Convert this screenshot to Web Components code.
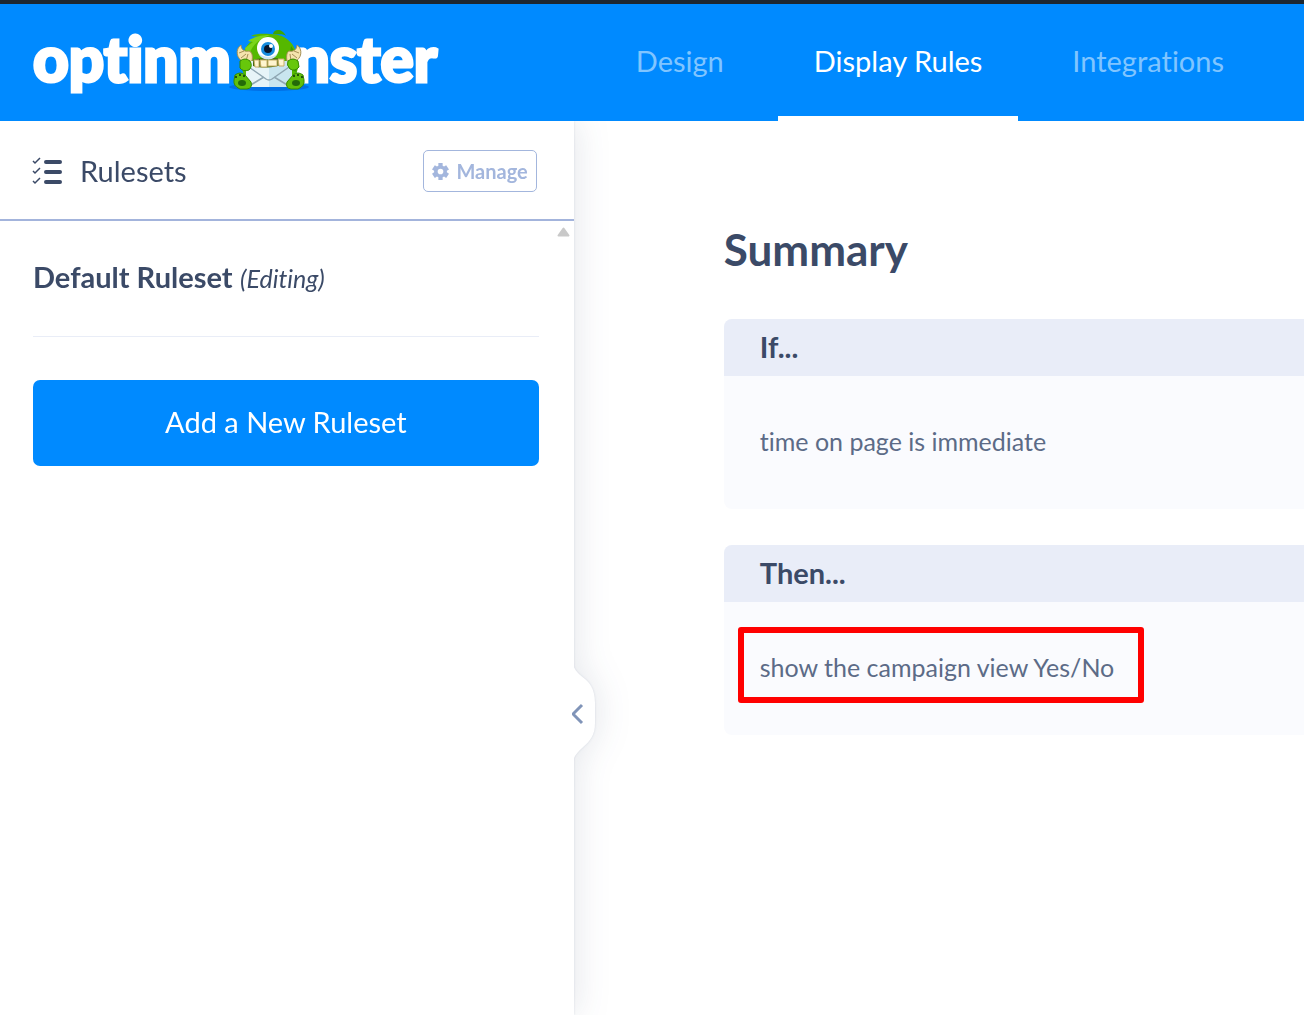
<!DOCTYPE html>
<html lang="en">
<head>
    <meta charset="UTF-8">
    <meta name="viewport" content="width=device-width, initial-scale=1.0">
    <title>OptinMonster - Display Rules</title>
    <style>
        body {
            margin: 0;
            background: #ffffff;
            color: #3b4a67;
            font-family: Lato, "Liberation Sans", sans-serif;
            font-size: 29px;
            font-variant-ligatures: none;
            overflow-x: hidden;
        }
    </style>
</head>
<body>
    <rules-app></rules-app>

    <script>
        class MonsterLogo extends HTMLElement {
            constructor() {
                super();
                this.attachShadow({ mode: 'open' });
                this.shadowRoot.innerHTML = `
                    <style>
                        :host { display: block; }
                        a {
                            display: flex;
                            align-items: flex-end;
                            color: #ffffff;
                            font-size: 62px;
                            font-weight: 900;
                            line-height: 76px;
                            text-decoration: none;
                            -webkit-text-stroke: 3px #ffffff;
                        }
                        svg {
                            flex: none;
                            width: 84px;
                            height: 72px;
                            margin: 0 -16px 0 -4px;
                            position: relative;
                        }
                    </style>
                    <a href="#" aria-label="optinmonster">
                        <span>optinm</span>
                        <svg viewBox="0 0 84 72" aria-hidden="true">
                            <ellipse cx="42" cy="63" rx="40" ry="4" fill="#0070e6"/>
                            <path d="M46 10c1-5 9-6 13 2-4-3-8-1-13-2z" fill="#3fa500"/>
                            <path d="M16 48c-4-18 4-32 17-35l-9-1c6-3 14-2 19-2 17 0 29 11 28 34l-4 14H19z" fill="#55b800"/>
                            <path d="M18 24l8-6-5-1c5-4 14-6 22-6-12 4-20 12-22 24z" fill="#7bd51b"/>
                            <path d="M64 22c6 8 8 17 5 26l-8-5z" fill="#3d9800"/>
                            <path d="M14 21c-6 4-5 14 3 17l8-1c1-5 0-9-3-10-4 1-8-1-8-6z" fill="#f4e4ae" stroke="#a69056"/>
                            <path d="M70 21c6 4 5 14-3 17l-7-1c-1-5 0-9 2-10 4 1 8-1 8-6z" fill="#f4e4ae" stroke="#a69056"/>
                            <path d="M12 29l5-2M14 34l5-4M19 37l2-7M72 29l-5-2M70 34l-5-4M64 37l-1-7" stroke="#a69056" fill="none"/>
                            <path d="M19 42l4-5h37l5 5v21H19z" fill="#e7f4f8"/>
                            <path d="M42 37h18l5 5v21H42z" fill="#c9e5ef"/>
                            <path d="M19 41l20 14q3 2 6 0l20-14M22 62l15-9M62 62l-15-9" fill="none" stroke="#8fa6b2" stroke-width="1.5"/>
                            <path d="M26 36c10-3 22-3 31 0v5l-6 1c-10 2-17 2-25 0z" fill="#426b12"/>
                            <path d="M27 36h5v7h-4zM33 36h7v7h-6zM41 36h9v6h-9zM51 35h6v7h-5z" fill="#fff5cf" stroke="#c7ad66"/>
                            <circle cx="41" cy="24" r="11" fill="#ffffff"/>
                            <path d="M31 29a11 11 0 0 0 20 0c-5 5-14 5-20 0z" fill="#d1e5ef"/>
                            <circle cx="41" cy="25" r="7" fill="#168bdd"/>
                            <circle cx="41" cy="25" r="4" fill="#07162f"/>
                            <circle cx="44" cy="22" r="2" fill="#ffffff"/>
                            <path d="M13 37q5-4 10 0 3 5-1 9-6 2-9-2zM61 37q5-4 10 0l1 6q-4 5-9 2-4-4-2-8z" fill="#67c70b" stroke="#348b00"/>
                            <path d="M8 51q5-4 10 0l6 7q2 6-4 7h-7q-7-3-6-9zM76 51q-5-4-10 0l-6 7q-2 6 4 7h7q7-3 6-9z" fill="#62bf0b" stroke="#348b00"/>
                            <ellipse cx="15" cy="59" rx="4" ry="3" fill="#246a09"/>
                            <ellipse cx="69" cy="59" rx="4" ry="3" fill="#246a09"/>
                            <path d="M8 53h2M12 51h2M16 52h2M66 52h2M70 51h2M74 53h2" stroke="#205508" stroke-width="2"/>
                        </svg>
                        <span>nster</span>
                    </a>
                `;
            }
        }

        class NavTab extends HTMLElement {
            constructor() {
                super();
                this.attachShadow({ mode: 'open' });
                this.shadowRoot.innerHTML = `
                    <style>
                        :host { display: flex; }
                        a {
                            box-sizing: border-box;
                            padding: 37px 36px 0;
                            border-bottom: 5px solid transparent;
                            color: #80c5ff;
                            line-height: 40px;
                            text-decoration: none;
                            white-space: nowrap;
                        }
                        :host([active]) a {
                            color: #ffffff;
                            border-color: #ffffff;
                        }
                    </style>
                    <a href="#"><slot></slot></a>
                `;
            }
        }

        class AppHeader extends HTMLElement {
            constructor() {
                super();
                this.attachShadow({ mode: 'open' });
                this.shadowRoot.innerHTML = `
                    <style>
                        :host {
                            display: block;
                            position: relative;
                            z-index: 2;
                            background: #008aff;
                            border-top: 4px solid #1d2731;
                        }
                        header {
                            display: grid;
                            grid-template-columns: 46% 1fr;
                            min-height: 117px;
                        }
                        monster-logo { padding: 16px 0 0 33px; }
                        nav { display: flex; gap: 18px; }
                    </style>
                    <header>
                        <monster-logo></monster-logo>
                        <nav>
                            <nav-tab>Design</nav-tab>
                            <nav-tab active>Display Rules</nav-tab>
                            <nav-tab>Integrations</nav-tab>
                        </nav>
                    </header>
                `;
            }
        }

        class RulesetSidebar extends HTMLElement {
            constructor() {
                super();
                this.attachShadow({ mode: 'open' });
                this.shadowRoot.innerHTML = `
                    <style>
                        :host {
                            display: block;
                            position: relative;
                            z-index: 1;
                            background: #ffffff;
                            filter: drop-shadow(0 0 1px rgba(60, 80, 120, 0.15)) drop-shadow(4px 0 16px rgba(40, 55, 90, 0.11));
                        }
                        .top {
                            display: flex;
                            align-items: center;
                            gap: 17px;
                            height: 96px;
                            padding: 2px 37px 0 32px;
                            border-bottom: 2px solid #a3b4dc;
                        }
                        h2 {
                            flex: 1;
                            margin: 0;
                            font-size: 29px;
                            font-weight: 400;
                            line-height: 40px;
                        }
                        button { font-family: inherit; cursor: pointer; }
                        .manage {
                            display: flex;
                            align-items: center;
                            gap: 7px;
                            height: 42px;
                            padding: 0 8px;
                            background: #ffffff;
                            border: 1px solid #a3b6dd;
                            border-radius: 5px;
                            color: #a3b6dd;
                            font-size: 20px;
                            font-weight: 700;
                        }
                        .scroll {
                            display: flex;
                            justify-content: flex-end;
                            padding: 6px 4px 0;
                        }
                        .body { padding: 20px 35px 0 33px; }
                        .ruleset {
                            padding-bottom: 38px;
                            border-bottom: 1px solid #e9edf7;
                            line-height: 40px;
                        }
                        strong { font-weight: 700; }
                        em { font-size: 25px; }
                        .add {
                            width: 100%;
                            height: 86px;
                            padding: 0 0 3px;
                            margin-top: 43px;
                            background: #008aff;
                            border: 0;
                            border-radius: 7px;
                            color: #ffffff;
                            font-size: 29px;
                        }
                        .handle {
                            position: absolute;
                            top: 60%;
                            left: calc(100% - 2px);
                            width: 24px;
                            height: 112px;
                            padding: 0;
                            background: none;
                            border: 0;
                        }
                        svg { display: block; flex: none; }
                    </style>
                    <div class="top">
                        <svg width="31" height="28" viewBox="0 0 31 28" aria-hidden="true">
                            <path d="M1 4l2 2 5-5M1 14l2 2 5-5M1 24l2 2 5-5" fill="none" stroke="#3b4a67" stroke-width="1.5"/>
                            <path d="M14 5h14M14 15h14M14 25h14" stroke="#3b4a67" stroke-width="4" stroke-linecap="round"/>
                        </svg>
                        <h2>Rulesets</h2>
                        <button class="manage">
                            <svg width="17" height="17" viewBox="0 0 24 24" aria-hidden="true">
                                <path fill="#a3b6dd" fill-rule="evenodd" d="M9 0h6v4l2 1 3-2 4 6-3 2v2l3 2-4 6-3-2-2 1v4H9v-4l-2-1-3 2-4-6 3-2v-2L0 9l4-6 3 2 2-1zM12 8a4 4 0 1 0 0 8 4 4 0 0 0 0-8z"/>
                            </svg>
                            Manage
                        </button>
                    </div>
                    <div class="scroll">
                        <svg width="13" height="10" viewBox="0 0 13 10" aria-hidden="true">
                            <path d="M6.500 1.500L11.500 8.500H1.500z" fill="#c9c9c9" stroke="#c9c9c9" stroke-width="2" stroke-linejoin="round"/>
                        </svg>
                    </div>
                    <div class="body">
                        <div class="ruleset"><strong>Default Ruleset</strong> <em>(Editing)</em></div>
                        <button class="add">Add a New Ruleset</button>
                    </div>
                    <button class="handle" aria-label="Collapse sidebar">
                        <svg width="24" height="112" viewBox="0 0 24 112">
                            <path d="M0 0C0 24 23 16 23 46V66C23 92 0 88 0 112z" fill="#ffffff"/>
                            <path d="M10 48L1 57L10 66" fill="none" stroke="#8094b8" stroke-width="3"/>
                        </svg>
                    </button>
                `;
            }
        }

        class SummaryCard extends HTMLElement {
            constructor() {
                super();
                this.attachShadow({ mode: 'open' });
                this.shadowRoot.innerHTML = `
                    <style>
                        :host {
                            display: block;
                            margin-bottom: 36px;
                            border-radius: 8px 0 0 8px;
                            overflow: hidden;
                            background: #fafbfe;
                        }
                        h3 {
                            margin: 0;
                            padding: 0 36px 2px;
                            background: #e9edf8;
                            font-size: 29px;
                            font-weight: 700;
                            line-height: 55px;
                        }
                        p {
                            margin: 0;
                            padding: 49px 36px 52px;
                            color: #5c6b87;
                            font-size: 25px;
                            line-height: 32px;
                        }
                        .text {
                            display: inline-block;
                            position: relative;
                        }
                        /* red callout drawn round the text */
                        :host([marked]) .text::after {
                            content: "";
                            position: absolute;
                            inset: -24px -30px -20px -22px;
                            border: 6px solid #ff0000;
                            border-radius: 3px;
                        }
                    </style>
                    <h3><slot name="title"></slot></h3>
                    <p><span class="text"><slot></slot></span></p>
                `;
            }
        }

        class RulesApp extends HTMLElement {
            constructor() {
                super();
                this.attachShadow({ mode: 'open' });
                this.shadowRoot.innerHTML = `
                    <style>
                        :host {
                            display: flex;
                            flex-direction: column;
                            min-height: 100vh;
                        }
                        .content {
                            flex: 1;
                            display: grid;
                            grid-template-columns: 44% 1fr;
                        }
                        main { padding: 102px 0 0 150px; }
                        h1 {
                            margin: 0 0 44px;
                            font-size: 44px;
                            font-weight: 700;
                            line-height: 52px;
                        }
                    </style>
                    <app-header></app-header>
                    <div class="content">
                        <ruleset-sidebar></ruleset-sidebar>
                        <main>
                            <h1>Summary</h1>
                            <summary-card>
                                <span slot="title">If...</span>
                                time on page is immediate
                            </summary-card>
                            <summary-card marked>
                                <span slot="title">Then...</span>
                                show the campaign view Yes/No
                            </summary-card>
                        </main>
                    </div>
                `;
            }
        }

        customElements.define('monster-logo', MonsterLogo);
        customElements.define('nav-tab', NavTab);
        customElements.define('app-header', AppHeader);
        customElements.define('ruleset-sidebar', RulesetSidebar);
        customElements.define('summary-card', SummaryCard);
        customElements.define('rules-app', RulesApp);
    </script>
</body>
</html>
